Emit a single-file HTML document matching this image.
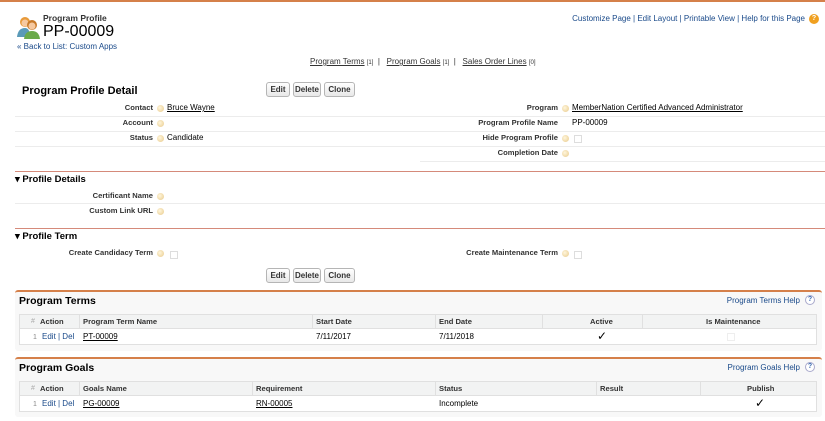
<!DOCTYPE html>
<html><head><style>
*{margin:0;padding:0;box-sizing:border-box}
body{width:825px;height:421px;background:#fff;position:relative;overflow:hidden;font-family:"Liberation Sans",Arial,sans-serif;color:#000}
.a{position:absolute;white-space:nowrap;font-size:8px;line-height:10px}
.b{font-weight:bold;color:#333}
.lk{text-decoration:underline;color:#000}
.blue{color:#1a4a8a}
.hl{position:absolute;height:1px;background:#ececec}
.ic{position:absolute;width:7px;height:7px;border-radius:50%;background:radial-gradient(circle at 40% 40%,#fff6dc,#e8c98a)}
.cb{position:absolute;width:8px;height:8px;border:1px solid #ddd;background:#fff}
.btn{position:absolute;height:15px;border:1px solid #b5b5b5;border-radius:3px;background:linear-gradient(#fff,#e8e8e8);font-size:8px;font-weight:bold;color:#333;text-align:center;line-height:13px}
.box{position:absolute;left:15px;width:807px;background:#f8f8f8;border-top:2px solid #d5804a;border-radius:3px}
.th{position:absolute;left:19px;width:798px;height:15px;background:#f2f3f3;border:1px solid #e0e0e0}
.tr{position:absolute;left:19px;width:798px;height:16px;background:#fff;border:1px solid #e0e0e0;border-top:none}
.vl{position:absolute;width:1px;height:15px;background:#e0e0e0}
.oline{position:absolute;left:15px;width:810px;height:1px;background:#d58a7a}
.qm{position:absolute;width:10px;height:10px;border-radius:50%;border:1px solid #aac;color:#3a6ab0;font-size:7px;font-weight:bold;text-align:center;line-height:8px;background:#fff}
.th8{font-size:7.6px}
</style></head><body>
<div style="position:absolute;left:0;top:0;width:825px;height:2px;background:#d5804a"></div>

<svg style="position:absolute;left:16px;top:15px" width="24" height="24" viewBox="0 0 24 24">
<circle cx="9" cy="7" r="5" fill="#e89a3a"/><circle cx="9" cy="8" r="3.5" fill="#f6c9a0"/>
<path d="M1 22 Q2 13 9 13 Q14 13 14 22Z" fill="#5a9ab8"/>
<circle cx="16" cy="10" r="5" fill="#c87a2a"/><circle cx="16" cy="11" r="3.5" fill="#f6c9a0"/>
<path d="M8 24 Q9 16 16 16 Q23 16 24 24Z" fill="#6aaa4a"/>
</svg>
<div class="a b" style="left:43px;top:13px;font-size:8.5px;color:#333">Program Profile</div>
<div class="a" style="left:43px;top:23px;font-size:16px;line-height:17px">PP-00009</div>
<div class="a blue" style="left:17px;top:42px;font-size:8px">« Back to List: Custom Apps</div>

<div class="a blue" style="right:20px;top:14px;font-size:8px">Customize Page | Edit Layout | Printable View | Help for this Page</div>
<div style="position:absolute;left:809px;top:14px;width:10px;height:10px;border-radius:50%;background:#f0a020;color:#fff;font-size:7px;font-weight:bold;text-align:center;line-height:10px">?</div>

<div class="a" style="left:310px;top:57px;font-size:8px;color:#333"><u>Program Terms</u> <span style="font-size:6px">[1]</span> &nbsp;| &nbsp; <u>Program Goals</u> <span style="font-size:6px">[1]</span> &nbsp;| &nbsp; <u>Sales Order Lines</u> <span style="font-size:6px">[0]</span></div>

<div class="a b" style="left:22px;top:85px;font-size:11px;line-height:12px;color:#000">Program Profile Detail</div>
<div class="btn" style="left:266px;top:82px;width:24px">Edit</div>
<div class="btn" style="left:293px;top:82px;width:28px">Delete</div>
<div class="btn" style="left:324px;top:82px;width:31px">Clone</div>

<div class="a b th8" style="right:672px;top:103px">Contact</div><div class="ic" style="left:157px;top:105px"></div><div class="a lk" style="left:167px;top:103px">Bruce Wayne</div>
<div class="a b th8" style="right:267px;top:103px">Program</div><div class="ic" style="left:562px;top:105px"></div><div class="a lk" style="left:572px;top:103px">MemberNation Certified Advanced Administrator</div>
<div class="hl" style="left:15px;top:116px;width:810px"></div>
<div class="a b th8" style="right:672px;top:118px">Account</div><div class="ic" style="left:157px;top:120px"></div>
<div class="a b th8" style="right:267px;top:118px">Program Profile Name</div><div class="a" style="left:572px;top:118px">PP-00009</div>
<div class="hl" style="left:15px;top:131px;width:810px"></div>
<div class="a b th8" style="right:672px;top:133px">Status</div><div class="ic" style="left:157px;top:135px"></div><div class="a" style="left:167px;top:133px">Candidate</div>
<div class="a b th8" style="right:267px;top:133px">Hide Program Profile</div><div class="ic" style="left:562px;top:135px"></div><div class="cb" style="left:574px;top:135px"></div>
<div class="hl" style="left:15px;top:146px;width:810px"></div>
<div class="a b th8" style="right:267px;top:148px">Completion Date</div><div class="ic" style="left:562px;top:150px"></div>
<div class="hl" style="left:420px;top:161px;width:405px"></div>

<div class="oline" style="top:171px"></div>
<div class="a b" style="left:15px;top:175px;font-size:9.5px;color:#000">▾ Profile Details</div>
<div class="a b th8" style="right:672px;top:191px">Certificant Name</div><div class="ic" style="left:157px;top:193px"></div>
<div class="hl" style="left:15px;top:203px;width:810px"></div>
<div class="a b th8" style="right:672px;top:206px">Custom Link URL</div><div class="ic" style="left:157px;top:208px"></div>

<div class="oline" style="top:228px"></div>
<div class="a b" style="left:15px;top:232px;font-size:9.5px;color:#000">▾ Profile Term</div>
<div class="a b th8" style="right:672px;top:248px">Create Candidacy Term</div><div class="ic" style="left:157px;top:250px"></div><div class="cb" style="left:170px;top:251px"></div>
<div class="a b th8" style="right:267px;top:248px">Create Maintenance Term</div><div class="ic" style="left:562px;top:250px"></div><div class="cb" style="left:574px;top:251px"></div>
<div class="btn" style="left:266px;top:268px;width:24px">Edit</div>
<div class="btn" style="left:293px;top:268px;width:28px">Delete</div>
<div class="btn" style="left:324px;top:268px;width:31px">Clone</div>

<div class="box" style="top:290px;height:61px"></div>
<div class="a b" style="left:19px;top:295px;font-size:10.5px;line-height:12px;color:#000">Program Terms</div>
<div class="a blue" style="right:25px;top:296px;font-size:8px">Program Terms Help</div>
<div class="qm" style="left:805px;top:295px">?</div>
<div class="th" style="top:314px"></div>
<div class="tr" style="top:329px"></div>
<div class="vl" style="left:79px;top:314px"></div><div class="vl" style="left:312px;top:314px"></div><div class="vl" style="left:435px;top:314px"></div><div class="vl" style="left:542px;top:314px"></div><div class="vl" style="left:642px;top:314px"></div>
<div class="a" style="left:31px;top:317px;color:#aaa;font-size:7px">#</div>
<div class="a b th8" style="left:40px;top:317px">Action</div>
<div class="a b th8" style="left:83px;top:317px">Program Term Name</div>
<div class="a b th8" style="left:316px;top:317px">Start Date</div>
<div class="a b th8" style="left:439px;top:317px">End Date</div>
<div class="a b th8" style="left:590px;top:317px">Active</div>
<div class="a b th8" style="left:706px;top:317px">Is Maintenance</div>
<div class="a" style="left:33px;top:333px;color:#888;font-size:7px">1</div>
<div class="a blue" style="left:42px;top:332px">Edit | Del</div>
<div class="a lk" style="left:83px;top:332px">PT-00009</div>
<div class="a" style="left:316px;top:332px">7/11/2017</div>
<div class="a" style="left:439px;top:332px">7/11/2018</div>
<div class="a" style="left:597px;top:330px;font-size:12px;line-height:12px">✓</div>
<div class="cb" style="left:727px;top:333px;border-color:#eee"></div>

<div class="box" style="top:357px;height:60px"></div>
<div class="a b" style="left:19px;top:362px;font-size:10.5px;line-height:12px;color:#000">Program Goals</div>
<div class="a blue" style="right:25px;top:363px;font-size:8px">Program Goals Help</div>
<div class="qm" style="left:805px;top:362px">?</div>
<div class="th" style="top:381px"></div>
<div class="tr" style="top:396px"></div>
<div class="vl" style="left:79px;top:381px"></div><div class="vl" style="left:252px;top:381px"></div><div class="vl" style="left:435px;top:381px"></div><div class="vl" style="left:596px;top:381px"></div><div class="vl" style="left:700px;top:381px"></div>
<div class="a" style="left:31px;top:384px;color:#aaa;font-size:7px">#</div>
<div class="a b th8" style="left:40px;top:384px">Action</div>
<div class="a b th8" style="left:83px;top:384px">Goals Name</div>
<div class="a b th8" style="left:256px;top:384px">Requirement</div>
<div class="a b th8" style="left:439px;top:384px">Status</div>
<div class="a b th8" style="left:600px;top:384px">Result</div>
<div class="a b th8" style="left:747px;top:384px">Publish</div>
<div class="a" style="left:33px;top:400px;color:#888;font-size:7px">1</div>
<div class="a blue" style="left:42px;top:399px">Edit | Del</div>
<div class="a lk" style="left:83px;top:399px">PG-00009</div>
<div class="a lk" style="left:256px;top:399px">RN-00005</div>
<div class="a" style="left:439px;top:399px">Incomplete</div>
<div class="a" style="left:755px;top:397px;font-size:12px;line-height:12px">✓</div>
</body></html>
